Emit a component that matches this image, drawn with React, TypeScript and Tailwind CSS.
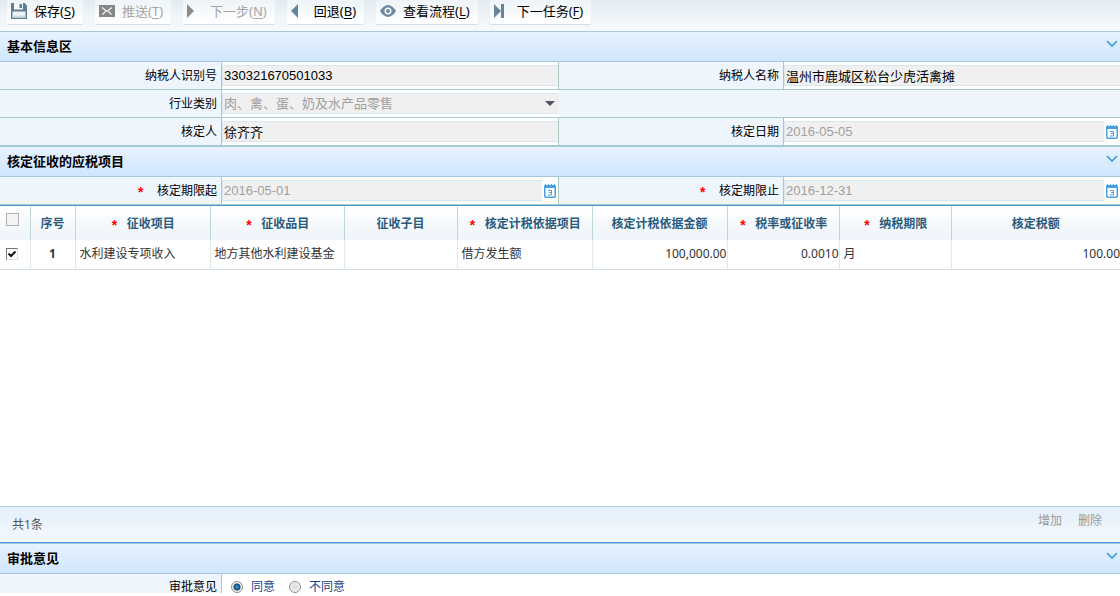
import { ReactNode, useState } from 'react';

const UI_FONT = "font-['Noto_Sans','Noto_Sans_CJK_SC',sans-serif]";
const FIELD_FONT = "font-['Liberation_Sans','Noto_Sans_CJK_SC',sans-serif]";
const FORM_GRID = 'grid grid-cols-[222fr_337fr_225fr_336fr]';
const FIELD =
  'h-[21px] w-full min-w-0 rounded-none border-y border-l border-[#d9e8ef] bg-[#f0f0f0] pl-px text-[13px] outline-none';

function SaveIcon() {
  return (
    <svg width="16" height="16" viewBox="0 0 16 16" aria-hidden>
      <path d="M0 0h13.5L16 2.5V16H0z" fill="#5f7d93" />
      <path d="M3 0h9v6.5H3z" fill="#f4f8fa" />
      <path d="M8.500 1h2.500v4H8.500z" fill="#5f7d93" />
      <path d="M1.500 8.500h13v6h-13z" fill="#eef4f7" />
      <path d="M1.500 12.500h13v2h-13z" fill="#cddae2" />
    </svg>
  );
}

function MailIcon() {
  return (
    <svg width="16" height="12" viewBox="0 0 16 12" aria-hidden>
      <path d="M0 0h16v12H0z" fill="#868686" />
      <path d="M3 2.500l5 4 5-4M3.500 9.500l3-3M12.500 9.500l-3-3" fill="none" stroke="#f4f4f4" strokeWidth="1.300" />
    </svg>
  );
}

function EyeIcon() {
  return (
    <svg width="16" height="12" viewBox="0 0 16 12" aria-hidden>
      <path d="M0 6C2 2.500 5 0 8 0s6 2.500 8 6c-2 3.500-5 6-8 6S2 9.500 0 6z" fill="#6f8ba0" />
      <circle cx="8" cy="6" r="3.500" fill="#f5f9fb" />
      <circle cx="8" cy="6" r="2" fill="#6f8ba0" />
    </svg>
  );
}

function ArrowIcon({ kind }: { kind: 'next' | 'back' | 'skip' }) {
  return (
    <svg width="16" height="14" viewBox="0 0 16 14" aria-hidden>
      {kind === 'next' && <path d="M0 0v14l7-7z" fill="#8b8b8b" />}
      {kind === 'back' && <path d="M7 0v14L0 7z" fill="#65859b" />}
      {kind === 'skip' && <path d="M0 0v14l7-7zM7 0h3v14H7z" fill="#65859b" />}
    </svg>
  );
}

function ChevronIcon() {
  return (
    <svg width="12" height="8" viewBox="0 0 12 8" aria-hidden>
      <path d="M1 1l5 5 5-5" fill="none" stroke="#3f97dc" strokeWidth="1.6" />
    </svg>
  );
}

function CalendarIcon() {
  return (
    <svg width="12" height="14" viewBox="0 0 12 14" aria-hidden>
      <rect x="0.750" y="1.750" width="10.500" height="11.500" rx="1" fill="#fff" stroke="#4a9fe0" strokeWidth="1.500" />
      <path d="M0 1.500h12V4H0z" fill="#4a9fe0" />
      <path d="M1.500 0v2M4.500 0v2M7.500 0v2M10.500 0v2" stroke="#4a9fe0" />
      <path d="M4 6.500h3.500v4.500H4M5 8.500h2.500" fill="none" stroke="#4a9fe0" />
    </svg>
  );
}

interface ToolButtonProps {
  icon: ReactNode;
  label: string;
  hotkey: string;
  disabled?: boolean;
}

function ToolButton({ icon, label, hotkey, disabled }: ToolButtonProps) {
  return (
    <button
      type="button"
      disabled={disabled}
      className="flex h-6 items-center gap-[7px] rounded-[2px] bg-linear-to-b from-[#eef4f8] to-white pr-2 pl-1 text-[13px] text-black shadow-[0_1px_1px_#d3dae0] disabled:text-[#a5a5a5]"
    >
      <span className="flex w-4 justify-center pb-[2px]">{icon}</span>
      <span className="whitespace-nowrap">
        {label}(<u className="underline-offset-2">{hotkey}</u>)
      </span>
    </button>
  );
}

function SectionHeader({ title }: { title: string }) {
  return (
    <div className="flex h-[31px] shrink-0 items-center justify-between border-y border-[#a3c8e0] bg-linear-to-b from-[#e7f2fe] to-[#d0e6fd] pr-[2px] pl-[7px]">
      <h2 className="text-[13px] font-bold text-black">{title}</h2>
      <button type="button" aria-label={title} className="pb-[6px]">
        <ChevronIcon />
      </button>
    </div>
  );
}

function Star() {
  return <span className="pt-[6px] font-['Liberation_Mono',monospace] text-sm leading-3 font-bold text-[#f00]">*</span>;
}

function FieldLabel({ id, text, required }: { id: string; text: string; required?: boolean }) {
  return (
    <div className="flex items-center justify-end gap-3 border-r border-[#a5c9c5] pr-1">
      {required && <Star />}
      <label htmlFor={id}>{text}</label>
    </div>
  );
}

function TextField({ id, value, last }: { id: string; value: string; last?: boolean }) {
  return (
    <div className={`flex items-center bg-white ${last ? '' : 'border-r border-[#a5c9c5]'}`}>
      <input id={id} readOnly value={value} className={`${FIELD} ${FIELD_FONT} text-black`} />
    </div>
  );
}

function DateField({ id, value, last }: { id: string; value: string; last?: boolean }) {
  return (
    <div className={`flex items-center gap-[2px] bg-white pr-[2px] ${last ? '' : 'border-r border-[#a5c9c5]'}`}>
      <input id={id} disabled value={value} className={`${FIELD} ${FIELD_FONT} text-[#a0a0a0]`} />
      <span className="shrink-0">
        <CalendarIcon />
      </span>
    </div>
  );
}

const ROW = `${FORM_GRID} h-7 shrink-0 border-b border-[#a5c9c5] bg-[#eef5fd]`;

const COLUMNS = [
  { title: '征收项目', required: true, width: 'w-[135px]' },
  { title: '征收品目', required: true, width: 'w-[134px]' },
  { title: '征收子目', required: false, width: 'w-[113px]' },
  { title: '核定计税依据项目', required: true, width: 'w-[135px]' },
  { title: '核定计税依据金额', required: false, width: 'w-[135px]' },
  { title: '税率或征收率', required: true, width: 'w-[112px]' },
  { title: '纳税期限', required: true, width: 'w-[112px]' },
  { title: '核定税额', required: false, width: '' },
];

const CELLS = [
  { text: '水利建设专项收入' },
  { text: '地方其他水利建设基金' },
  { text: '' },
  { text: '借方发生额' },
  { text: '100,000.00', right: true },
  { text: '0.0010', right: true },
  { text: '月' },
  { text: '100.00', right: true },
];

function TaxTable() {
  const [checked, setChecked] = useState(true);
  return (
    <table className="w-full table-fixed border-collapse text-xs text-[#333]">
      <thead>
        <tr className="h-[34px] bg-linear-to-b from-white to-[#eef4f9] text-[#2a5a7c]">
          <th className="w-[30px] border-r border-[#bfd8d5] pb-2 pl-[6px]">
            <input
              type="checkbox"
              disabled
              aria-label="全选"
              className="block size-[13px] appearance-none border border-[#b0b0b0] bg-[#f4f4f4]"
            />
          </th>
          <th className="w-[45px] border-r border-[#bfd8d5] pt-[2px]">序号</th>
          {COLUMNS.map((col) => (
            <th key={col.title} className={`${col.width} border-r border-[#bfd8d5] pt-[2px] last:border-r-0`}>
              <span className="flex items-center justify-center gap-2 whitespace-nowrap">
                {col.required && <Star />}
                {col.title}
              </span>
            </th>
          ))}
        </tr>
      </thead>
      <tbody>
        <tr className="h-[29px] border-b border-[#cfe0de]">
          <td className="border-r border-[#dfe9e8] pl-[6px]">
            <span className="relative block size-3">
              <input
                type="checkbox"
                aria-label="选择第1行"
                checked={checked}
                onChange={(e) => setChecked(e.target.checked)}
                className="block size-3 appearance-none border border-t-[#777] border-r-[#ddd] border-b-[#ddd] border-l-[#777] bg-white"
              />
              {checked && (
                <svg className="pointer-events-none absolute inset-0" width="12" height="12" viewBox="0 0 12 12" aria-hidden>
                  <path d="M2.500 5.500l2.500 2.500 4.500-4.500" fill="none" stroke="#111" strokeWidth="2" />
                </svg>
              )}
            </span>
          </td>
          <td className="border-r border-[#dfe9e8] text-center font-bold">1</td>
          {CELLS.map((cell, i) => (
            <td
              key={i}
              className={`border-r border-[#dfe9e8] whitespace-nowrap last:border-r-0 ${cell.right ? 'text-right' : 'pl-1'}`}
            >
              {cell.text}
            </td>
          ))}
        </tr>
      </tbody>
    </table>
  );
}

interface OpinionProps {
  value: string;
  label: string;
  selected: boolean;
  onSelect: () => void;
}

function Opinion({ value, label, selected, onSelect }: OpinionProps) {
  return (
    <label className="flex items-center gap-2">
      <input
        type="radio"
        name="opinion"
        value={value}
        checked={selected}
        onChange={onSelect}
        className="size-3 appearance-none rounded-full border border-[#8e8f8f] bg-[radial-gradient(#dcdcdc,#f8f8f8)] checked:bg-[radial-gradient(circle,#2f8fc4_0_1px,#12456b_3px,#eee_4px)]"
      />
      {label}
    </label>
  );
}

export default function App() {
  const [opinion, setOpinion] = useState('agree');

  return (
    <main className={`flex h-screen flex-col bg-white pb-[3px] text-xs text-black ${UI_FONT}`}>
      <div className="flex h-[31px] shrink-0 items-start gap-3 bg-linear-to-b from-[#e3ecf3] to-[#f8fbfc] pl-[7px]">
        <ToolButton icon={<SaveIcon />} label="保存" hotkey="S" />
        <ToolButton icon={<MailIcon />} label="推送" hotkey="T" disabled />
        <ToolButton icon={<ArrowIcon kind="next" />} label="下一步" hotkey="N" disabled />
        <ToolButton icon={<ArrowIcon kind="back" />} label="回退" hotkey="B" />
        <ToolButton icon={<EyeIcon />} label="查看流程" hotkey="L" />
        <ToolButton icon={<ArrowIcon kind="skip" />} label="下一任务" hotkey="F" />
      </div>

      <SectionHeader title="基本信息区" />
      <div className={ROW}>
        <FieldLabel id="taxpayer-id" text="纳税人识别号" />
        <TextField id="taxpayer-id" value="330321670501033" />
        <FieldLabel id="taxpayer-name" text="纳税人名称" />
        <TextField id="taxpayer-name" value="温州市鹿城区松台少虎活禽摊" last />
      </div>
      <div className={ROW}>
        <FieldLabel id="industry" text="行业类别" />
        <div className="relative flex items-center bg-white">
          <select id="industry" disabled className={`${FIELD} ${FIELD_FONT} appearance-none text-[#a0a0a0] opacity-100`}>
            <option>肉、禽、蛋、奶及水产品零售</option>
          </select>
          <svg className="pointer-events-none absolute right-1" width="10" height="5" viewBox="0 0 10 5" aria-hidden>
            <path d="M0 0h10L5 5z" fill="#4d5663" />
          </svg>
        </div>
      </div>
      <div className={ROW}>
        <FieldLabel id="assessor" text="核定人" />
        <TextField id="assessor" value="徐齐齐" />
        <FieldLabel id="assess-date" text="核定日期" />
        <DateField id="assess-date" value="2016-05-05" last />
      </div>

      <SectionHeader title="核定征收的应税项目" />
      <div className={ROW}>
        <FieldLabel id="period-start" text="核定期限起" required />
        <DateField id="period-start" value="2016-05-01" />
        <FieldLabel id="period-end" text="核定期限止" required />
        <DateField id="period-end" value="2016-12-31" last />
      </div>

      <div className="min-h-0 flex-1 border-t border-[#4a9ad4]">
        <TaxTable />
      </div>

      <div className="flex h-[37px] shrink-0 items-center justify-between border-t border-b border-t-[#b0d0ea] border-b-[#4096d8] bg-linear-to-b from-[#e3effa] to-[#f5f9fe] px-3 text-[#555]">
        <span>共1条</span>
        <div className="flex gap-4 pr-[6px] pb-2 text-[#999]">
          <button type="button" disabled>增加</button>
          <button type="button" disabled>删除</button>
        </div>
      </div>

      <SectionHeader title="审批意见" />
      <fieldset className="grid shrink-0 grid-cols-[222fr_898fr] leading-3" aria-label="审批意见">
        <div className="border-r border-[#a5c9c5] bg-[#eef5fd] pt-[7px] pr-1 text-right">审批意见</div>
        <div className="flex gap-[14px] pt-[7px] pl-[9px] text-[#15428b]">
          <Opinion value="agree" label="同意" selected={opinion === 'agree'} onSelect={() => setOpinion('agree')} />
          <Opinion value="reject" label="不同意" selected={opinion === 'reject'} onSelect={() => setOpinion('reject')} />
        </div>
      </fieldset>
    </main>
  );
}
